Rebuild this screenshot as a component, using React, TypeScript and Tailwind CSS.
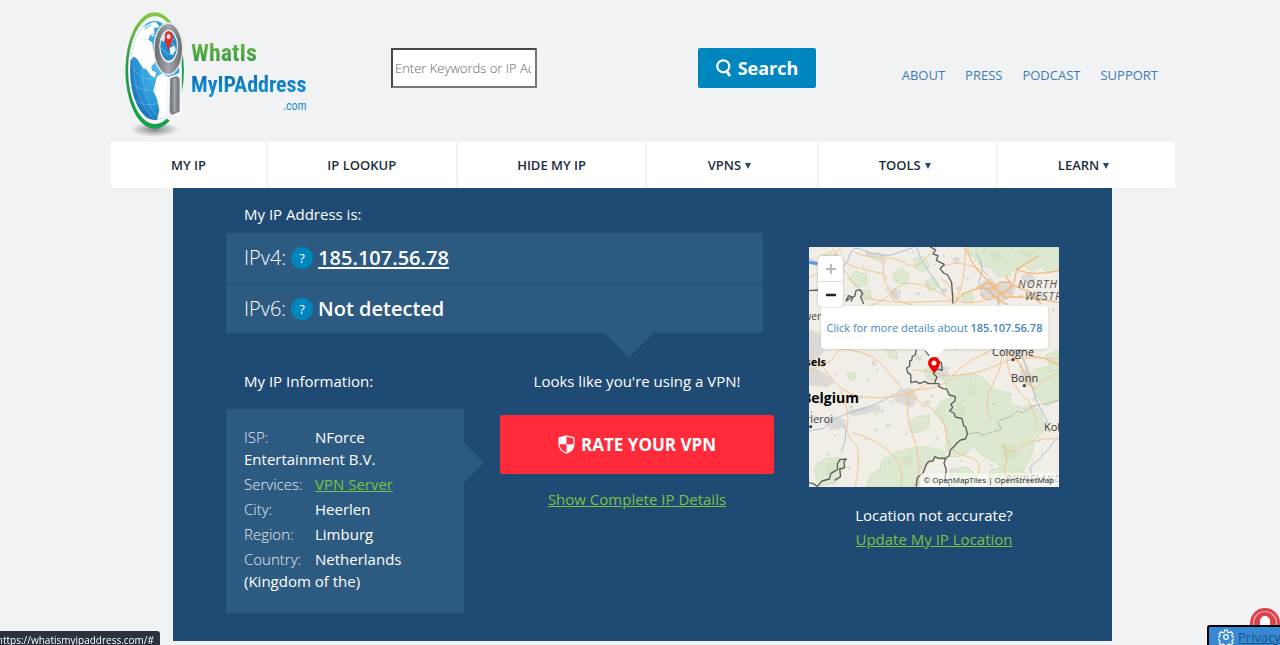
import type { ReactNode } from "react";

const navItems = [
  { label: "MY IP", menu: false },
  { label: "IP LOOKUP", menu: false },
  { label: "HIDE MY IP", menu: false },
  { label: "VPNS", menu: true },
  { label: "TOOLS", menu: true },
  { label: "LEARN", menu: true },
];

const topLinks = ["ABOUT", "PRESS", "PODCAST", "SUPPORT"];

function LogoGlobe() {
  return (
    <svg viewBox="0 0 210 400" className="h-[133px] w-[70px] shrink-0" aria-hidden="true">
      <defs>
        <linearGradient id="ring" x1="0" y1="0" x2="0" y2="1">
          <stop offset="0" stopColor="#8cc63f" />
          <stop offset="0.45" stopColor="#229a48" />
          <stop offset="1" stopColor="#16a04a" />
        </linearGradient>
        <radialGradient id="sea" cx="0.6" cy="0.4" r="0.7">
          <stop offset="0" stopColor="#5fc0ee" />
          <stop offset="0.6" stopColor="#2c9bdc" />
          <stop offset="1" stopColor="#1668b2" />
        </radialGradient>
        <linearGradient id="steel" x1="0" y1="0" x2="1" y2="0">
          <stop offset="0" stopColor="#666a6d" />
          <stop offset="0.5" stopColor="#a5a8aa" />
          <stop offset="1" stopColor="#6b6e70" />
        </linearGradient>
        <radialGradient id="shade">
          <stop offset="0" stopColor="#000" stopOpacity="0.45" />
          <stop offset="1" stopColor="#000" stopOpacity="0" />
        </radialGradient>
        <clipPath id="globe">
          <ellipse cx="101" cy="185" rx="74" ry="149" />
        </clipPath>
      </defs>
      <ellipse cx="101" cy="362" rx="74" ry="22" fill="url(#shade)" />
      <ellipse cx="101" cy="185" rx="88" ry="175" fill="url(#ring)" />
      <ellipse cx="102" cy="184" rx="81" ry="162" fill="#f5f8fa" />
      <ellipse cx="101" cy="185" rx="74" ry="149" fill="url(#sea)" />
      <g clipPath="url(#globe)">
        <path d="M38 93Q58 46 104 38L116 54 98 58 101 72 88 77 82 92 94 102 96 125 108 137 119 130 117 151 104 158 91 173 93 186 105 190 102 207 89 199 76 181 66 178 49 151 38 143 29 155 26 120Z" fill="#fff" />
        <path d="M68 53 93 43 90 52 73 64ZM88 76 100 74 103 80 93 85Z" fill="#b5dff3" />
        <path d="M108 204 123 193 144 206 160 220 170 244 163 279 143 312 117 341 107 341 115 303 108 270 97 246Z" fill="#fff" />
        <g fill="none" stroke="#a8daf3" strokeOpacity="0.7" strokeWidth="1.5">
          <path d="M29 225Q71 253 115 240M34 268Q71 298 111 284M38 150Q32 260 97 330M64 177Q65 280 116 333M34 178Q68 222 103 207" />
        </g>
      </g>
      <path d="M138 205Q166 200 182 186L184 330Q160 350 134 326Z" fill="#f3f6f8" />
      <path d="M150 210Q160 206 167 204Q172 205 174 211V307L153 316Q148 312 148 303Z" fill="url(#steel)" stroke="#777b7d" strokeWidth="4" strokeLinejoin="round" />
      <ellipse cx="142" cy="120" rx="45" ry="80" fill="#e4e9eb" />
      <ellipse cx="142" cy="120" rx="41" ry="75" fill="url(#steel)" />
      <ellipse cx="143" cy="112" rx="28" ry="49" fill="#fff" />
      <ellipse cx="143" cy="112" rx="25" ry="44" fill="#2689c8" />
      <path d="M120 91 133 72 150 77 158 92 149 99 136 85 127 99ZM146 117 161 110 165 122 155 139 148 134Z" fill="#edf6fb" />
      <path d="M122 118Q137 140 158 137M132 72Q158 103 164 127" fill="none" stroke="#8fd0f2" strokeWidth="2" />
      <path d="M142 125Q137 104 131 94Q129 68 143 66Q157 69 156 91Q151 101 142 125Z" fill="#dc2d25" />
      <ellipse cx="143" cy="83" rx="6" ry="8" fill="#f8dede" />
    </svg>
  );
}

function Help({ label }: { label: string }) {
  return (
    <button aria-label={label} className="mx-[5px] flex size-[22px] items-center justify-center rounded-full bg-[#0086bf] text-[13px] leading-[22px] text-white">
      ?
    </button>
  );
}

function InfoRow({ label, children }: { label: string; children: ReactNode }) {
  return (
    <li>
      <span className="inline-block w-[71px] font-light text-[#e6edf3]">{label}</span>
      {children}
    </li>
  );
}

function MapLabel({ className, children }: { className: string; children: ReactNode }) {
  return <span className={`absolute whitespace-nowrap ${className}`}>{children}</span>;
}

function MapArt() {
  return (
    <svg viewBox="27 21 750 720" className="block size-full" aria-hidden="true">
      <rect x="27" y="21" width="750" height="720" fill="#f1eee8" />
      <g fill="#dde8d0" stroke="#c3dcae" strokeWidth="2">
        <path d="M503 21H777V92L742 98 724 80 697 93 668 76 640 91 626 109 595 110 569 82 541 79 530 53 506 44Z" />
        <path d="M432 420 480 405 520 398 555 419 580 448 632 461 629 489 670 505 688 491 724 513 731 546 727 576 704 601 696 640 681 672 660 706 620 706 588 667 544 644 520 618 492 647 450 651 437 623 445 584 425 541 404 521 420 487 451 474Z" />
        <path d="M700 390 740 380 777 388V480L740 500 700 460ZM570 690 620 680 680 700 690 741H560ZM450 690 500 680 530 710 520 741H455Z" />
        <path d="M247 659 292 636 330 624 377 621 426 630 444 659 401 657 371 685 354 740H197L214 701 239 690ZM43 684 76 656 120 652 134 681 106 730 54 738ZM326 550 351 530 388 526 386 560 356 578 334 576Z" />
        <path d="M62 53 88 34 113 51 95 74 72 72ZM146 117 166 93 199 104 203 132 176 141ZM277 102 303 84 327 103 318 132 290 129ZM340 57 371 50 390 78 370 95 346 85ZM179 153 209 150 214 176 188 181ZM373 125 404 113 415 141 387 153ZM213 44 239 36 250 54 227 63ZM485 160 514 154 521 184 493 190ZM260 332 288 330 292 357 267 351ZM373 386 399 388 407 420 381 416ZM140 403 160 396 169 411 151 423ZM221 501 239 510 231 525 217 516ZM738 344 777 330V388L752 392Z" />
      </g>
      <g fill="#cfe1bf" opacity="0.7">
        <path d="M566 43 600 29 609 59 585 70ZM660 27 706 34 692 55 672 49ZM472 490 499 508 490 536 463 522ZM599 616 641 608 650 647 619 667ZM507 431 533 442 519 471 499 458ZM301 657 335 643 341 668 319 680ZM74 672 112 662 103 694 79 711Z" />
      </g>
      <g fill="#dcd9d6">
        <path d="M546 126 570 112 591 135 623 128 646 145 638 170 611 183 580 175 552 181 540 158ZM660 110 690 96 708 118 690 140ZM690 160 720 150 738 170 712 188ZM604 296 633 286 671 302 684 328 655 347 620 337 597 323ZM28 267 64 283 76 319 61 351 28 363ZM28 374 59 391 80 404 104 426 82 441 28 436ZM292 452 330 443 354 471 336 502 309 493 281 483ZM415 376 441 382 449 410 426 419 409 399ZM660 385 692 398 703 426 682 439 661 420ZM266 155 285 143 303 153 297 176 277 182ZM198 31 225 43 218 55 194 49ZM69 541 101 527 138 540 132 563 94 571ZM140 512 192 500 239 494 242 506 199 522 154 528Z" />
        <path d="M235 57l13-6 10 15-16 6zM421 150l15-8 8 12-16 8zM455 55l20-5 7 11-15 11zM100 102l17-6 5 12-13 8zM351 345l15 4-3 13-18-3zM213 362l11-2 6 14-12 5zM145 463l14-3 8 10-14 6zM258 553l9-5 7 8-13 7zM376 480l14 4-3 12-12-4zM708 258l17-7 10 15-18 11zM525 290l15-5 9 14-16 8z" />
      </g>
      <g fill="#d8d5d3">
        {Array.from({ length: 110 }, (_, i) => (
          <ellipse key={i} cx={32 + ((i * 157) % 735)} cy={28 + ((i * 263) % 700)} rx={3 + (i % 4)} ry={3 + (i % 3)} />
        ))}
      </g>
      <g fill="none" stroke="#a6bfe2" strokeWidth="3">
        <path d="M27 55Q50 64 65 79T108 92Q139 84 148 48T191 31Q249 53 281 43T340 22M349 21Q359 57 384 92T430 159" />
        <path d="M527 39Q558 82 541 111T575 155Q602 180 595 215T632 293Q668 344 683 397T713 491Q735 522 743 549M695 704Q683 680 706 667T727 642Q741 638 762 603L777 592M286 461Q230 496 166 513T71 565L27 573M133 555Q145 592 123 636" />
      </g>
      <path d="M27 66 52 72" fill="none" stroke="#5f94dc" strokeWidth="9" />
      <g fill="none" stroke="#f2c48e" strokeWidth="3">
        <path d="M27 112Q81 91 105 46T160 21M67 42Q125 72 157 123T214 178L301 187 455 183M158 34Q201 54 239 51T314 70 382 50 416 21M257 53Q244 91 253 119T279 156Q313 111 386 143T465 189M96 21Q119 76 202 91T253 119M278 156Q245 188 212 195M279 156Q283 184 334 194M423 116Q451 131 461 165T550 183" />
        <path d="M27 389Q88 375 105 347T150 330Q220 340 253 381T311 452M27 348Q68 374 83 399T132 451Q176 480 273 471L327 461Q369 440 414 412M327 460Q315 529 337 583T356 699L344 740M122 453Q151 521 142 552T172 620Q180 669 166 740M158 579Q221 593 269 635T303 740M327 460Q355 485 395 505T440 594Q457 643 503 650T535 703" />
        <path d="M337 390Q372 391 411 401T457 407Q493 369 536 349T595 318M457 407Q526 403 570 384T636 358Q682 351 777 356M605 332Q610 374 579 432T573 538M624 344Q616 384 644 433T684 480Q701 507 712 562M664 342Q685 385 701 426M608 621 639 637Q691 590 777 596M608 610Q628 653 613 690L623 740M455 415Q418 446 365 448T327 461M465 189Q500 120 495 21M430 80Q470 60 520 80T564 110M716 440Q740 410 777 400" />
      </g>
      <g fill="none" stroke="#f6b878" strokeWidth="4">
        <path d="M465 189Q489 151 540 145T616 173Q655 165 777 188M495 21Q514 70 545 104T591 137L599 191M541 163 564 181 608 162 641 133 650 88 716 47M575 145 605 126 636 128M569 154Q584 180 625 194M527 145 565 128 592 154 636 158M618 108 633 134 693 157 724 192M650 88Q700 110 777 92" />
        <path d="M595 317Q624 289 667 307T691 349Q732 348 777 376M627 336Q665 369 676 405T708 450" />
      </g>
      <g fill="none" stroke="#b1b4a8" strokeWidth="3" strokeDasharray="11 3">
        <path d="M502 582 534 577 547 585 577 577 604 568 593 544 633 528 653 513 669 519 698 498 754 487 777 480" />
      </g>
      <g fill="none" stroke="#5b5d5e" strokeWidth="4" strokeLinejoin="round">
        <path d="M391 21 407 30 399 42 414 47 409 61 433 73 420 86 431 99 443 105 455 128 459 191M27 152 52 150 64 157M137 184 151 174 164 169 168 152 180 149 188 160 182 171 191 192M138 180 147 167 158 173 153 185M349 329 346 345 337 349 335 362 329 362 329 378 320 384 323 398 332 404 333 428 348 424 359 431 374 424 386 431 404 430 417 431 417 440 430 446 440 447 448 465 466 470 465 483 453 493 458 502 449 513 462 519 466 531 486 536 491 557 497 561 502 582 496 597 482 600 471 609 460 622 451 630 448 647 438 654 417 655 404 650 399 663 386 664 378 675 370 698 352 713 349 740M437 654 432 670 439 689 435 715 450 740M27 728 39 731 52 739 66 723 88 717 93 700 113 688 112 673 119 659 139 657 132 665 134 683 119 687 122 710 104 721M404 430 411 410 400 401 412 387 427 391 424 367 409 364 412 352M375 331 387 347" />
      </g>
      <g fill="#444">
        <circle cx="639" cy="359" r="5" />
        <circle cx="673" cy="437" r="5" />
        <circle cx="32" cy="560" r="5" />
      </g>
    </svg>
  );
}

function LocationMap() {
  return (
    <div className="relative h-[240px] w-[250px] overflow-hidden">
      <MapArt />
      <MapLabel className="left-[209px] top-[30px] text-[11px] leading-[14px] tracking-[1px] italic text-[#555]">NORTH</MapLabel>
      <MapLabel className="left-[216px] top-[42px] text-[11px] leading-[14px] tracking-[1px] italic text-[#555]">WESTPHALIA</MapLabel>
      <MapLabel className="right-[238px] top-[62px] text-[10px] leading-[14px] text-[#444]">Antwer</MapLabel>
      <MapLabel className="left-[183px] top-[98px] text-[11px] leading-[14px] text-[#333]">Cologne</MapLabel>
      <MapLabel className="left-[202px] top-[124px] text-[11px] leading-[14px] text-[#333]">Bonn</MapLabel>
      <MapLabel className="left-[235px] top-[173px] text-[11px] leading-[14px] text-[#333]">Koblenz</MapLabel>
      <MapLabel className="right-[233px] top-[108px] text-[11px] leading-[14px] font-bold text-black">Brussels</MapLabel>
      <MapLabel className="right-[200px] top-[142px] text-[14px] leading-[18px] font-bold text-black">Belgium</MapLabel>
      <MapLabel className="right-[226px] top-[165px] text-[11px] leading-[14px] text-[#444]">Charleroi</MapLabel>
      <MapLabel className="left-[197px] top-[225px] text-[9px] leading-[14px] tracking-[1px] italic text-[#777]">RHINELAND</MapLabel>

      <a href="#details" className="absolute left-[12px] top-[59px] flex h-[43px] w-[227px] items-center justify-center rounded-[3px] bg-white text-[11px] whitespace-nowrap text-[#4283bd] shadow">
        <span>Click for more details about <span className="font-semibold">185.107.56.78</span></span>
      </a>
      <svg viewBox="0 0 20 10" className="absolute left-[115px] top-[102px] h-[10px] w-[20px]" aria-hidden="true">
        <path d="M0 0H20L10 10Z" fill="#fff" />
      </svg>
      <svg viewBox="0 0 14 18" className="absolute left-[118px] top-[110px] h-[18px] w-[14px]" aria-hidden="true">
        <path d="M7 0a6 6 0 0 1 6 6c0 3-3 6-6 10C4 12 1 9 1 6a6 6 0 0 1 6-6Z" fill="#f00000" />
        <circle cx="7" cy="6" r="2.5" fill="#fff" />
      </svg>
      <div className="absolute left-[9px] top-[9px] w-[25px] overflow-hidden rounded-[4px] bg-white shadow-[0_0_2px_rgba(0,0,0,0.35)]">
        <button aria-label="Zoom in" className="flex h-[26px] w-full items-center justify-center border-b border-[#ddd]">
          <svg viewBox="0 0 12 12" className="size-3"><path d="M6 1V11M1 6H11" stroke="#bbb" strokeWidth="2" /></svg>
        </button>
        <button aria-label="Zoom out" className="flex h-[25px] w-full items-center justify-center">
          <svg viewBox="0 0 12 12" className="size-3"><path d="M1 6H11" stroke="#222" strokeWidth="2.5" /></svg>
        </button>
      </div>
      <p className="absolute right-0 bottom-0 bg-white/50 pr-[5px] pl-1 text-[8px] leading-[14px] whitespace-nowrap text-[#222]">
        © OpenMapTiles | OpenStreetMap
      </p>
    </div>
  );
}

export default function App() {
  return (
    <div className="min-h-screen overflow-hidden bg-[#f1f2f4] pl-[6px] pb-[3px] font-['Open_Sans','Noto_Sans',sans-serif] text-white">
      <div className="mx-auto max-w-[1064px]">
        <header className="flex h-[142px] items-start">
          <a href="#home" aria-label="What Is My IP Address" className="mt-[9px] ml-[10px] flex w-[191px] font-['Liberation_Sans_Narrow','Roboto_Condensed','Liberation_Sans',sans-serif] font-bold">
            <LogoGlobe />
            <span className="flex flex-col pt-[29px]">
              <span className="bg-linear-to-b from-[#77bc3f] to-[#1f9447] bg-clip-text text-[24px] leading-[30px] text-transparent">WhatIs</span>
              <span className="bg-linear-to-b from-[#0b63ad] to-[#18a2e2] bg-clip-text text-[22px] leading-[34px] text-transparent">MyIPAddress</span>
              <span className="-mt-[3px] self-end text-[12px] leading-[14px] font-normal text-[#1b8cce]">.com</span>
            </span>
          </a>
          <form className="flex flex-1 items-start pt-12 pl-[79px]" onSubmit={(e) => e.preventDefault()}>
            <input
              type="text"
              aria-label="Enter Keywords or IP Address"
              placeholder="Enter Keywords or IP Address"
              className="h-10 w-[146px] border-2 border-t-[#484848] border-r-[#777] border-b-[#777] border-l-[#484848] bg-white pr-1 pl-[2px] text-[13px] font-light text-[#333] placeholder:text-[#666]"
            />
            <button className="ml-[161px] flex h-10 w-[118px] items-center justify-center gap-[6px] rounded-[2px] bg-[#0086bf] text-[18px] font-bold">
              <svg viewBox="0 0 16 18" className="h-[18px] w-4" fill="none" stroke="white" strokeWidth="2.2" aria-hidden="true">
                <circle cx="7.3" cy="7.3" r="6" />
                <path d="M10.5 12 14 17" strokeWidth="2.8" />
              </svg>
              Search
            </button>
          </form>
          <nav aria-label="Site" className="flex gap-5 pt-[65px] pr-[17px] text-[13px] leading-[20px] font-medium text-[#3d7cb4]">
            {topLinks.map((label) => (
              <a key={label} href={`#${label.toLowerCase()}`}>{label}</a>
            ))}
          </nav>
        </header>

        <nav aria-label="Main" className="grid grid-cols-[155fr_188fr_188fr_170fr_177fr_177fr] gap-[2px] text-[13px] font-semibold text-[#1d2d3c]">
          {navItems.map((item) => (
            <a key={item.label} href="#menu" className={`flex h-[46px] items-center justify-center gap-1 bg-white pt-px ${item.menu ? "pr-[6px]" : ""}`}>
              {item.label}
              {item.menu && (
                <svg viewBox="0 0 6 6" className="size-[6px]" aria-hidden="true"><path d="M0 0H6L3 6Z" fill="#1f4a73" /></svg>
              )}
            </a>
          ))}
        </nav>

        <main className="mr-[63px] ml-[62px] flex justify-between bg-[#1f4a73] px-[53px] pt-[14px] pb-7 text-[15px] leading-[22px]">
          <div className="w-[548px]">
            <h2 className="pl-[18px] leading-6">My IP Address is:</h2>
            <div className="relative mt-[7px] mr-[11px] flex flex-col gap-px text-[20px]">
              <p className="flex h-[50px] items-center bg-[#2d5a80] pl-[18px]">
                <span className="font-light">IPv4:</span> <Help label="What is IPv4?" />
                <a href="#ip" className="font-semibold underline decoration-2 underline-offset-2">185.107.56.78</a>
              </p>
              <p className="flex h-[49px] items-center bg-[#2d5a80] pl-[18px]">
                <span className="font-light">IPv6:</span> <Help label="What is IPv6?" />
                <strong className="font-semibold">Not detected</strong>
              </p>
              <span className="absolute top-full left-[378px] h-6 w-[50px] bg-[#2d5a80] [clip-path:polygon(0_0,100%_0,50%_100%)]" />
            </div>
            <div className="mt-9 flex gap-9">
              <section className="w-[238px]">
                <h2 className="pl-[18px] leading-6">My IP Information:</h2>
                <div className="relative mt-4 bg-[#2d5a80] px-[18px] pt-[17px] pb-[21px]">
                  <ul className="flex flex-col gap-[3px]">
                    <InfoRow label="ISP:">NForce Entertainment B.V.</InfoRow>
                    <InfoRow label="Services:"><a href="#vpn" className="text-[#7cc142] underline">VPN Server</a></InfoRow>
                    <InfoRow label="City:">Heerlen</InfoRow>
                    <InfoRow label="Region:">Limburg</InfoRow>
                    <InfoRow label="Country:">Netherlands (Kingdom of the)</InfoRow>
                  </ul>
                  <span className="absolute top-[34px] left-full h-10 w-5 bg-[#2d5a80] [clip-path:polygon(0_0,100%_50%,0_100%)]" />
                </div>
              </section>
              <section className="flex w-[274px] flex-col items-center">
                <p className="leading-6">Looks like you're using a VPN!</p>
                <button className="mt-[22px] flex h-[59px] w-full items-center justify-center gap-[6px] rounded-[2px] bg-[#ff2a3a] text-[17px] font-bold">
                  <svg viewBox="0 0 17 19" className="h-[19px] w-[17px]" aria-hidden="true">
                    <path d="M8.5.8 16 3V9Q16 15.5 8.5 18.2 1 15.5 1 9V3Z" fill="none" stroke="white" strokeWidth="1.2" />
                    <path d="M8.5.8V9.3H1V3ZM8.5 9.3H16Q15.6 15.5 8.5 18.2Z" fill="white" />
                  </svg>
                  RATE YOUR VPN
                </button>
                <a href="#complete" className="mt-[13px] leading-6 text-[#7cc142] underline">Show Complete IP Details</a>
              </section>
            </div>
          </div>
          <aside className="w-[250px] pt-[45px] text-center">
            <LocationMap />
            <p className="mt-4 leading-6">Location not accurate?</p>
            <a href="#update" className="leading-[25px] text-[#7cc142] underline">Update My IP Location</a>
          </aside>
        </main>
      </div>

      <div className="fixed bottom-0 left-0 flex h-[14px] w-[160px] justify-end overflow-hidden rounded-tr-[3px] bg-[#2b323c] pr-[6px] text-[10px] leading-[19px] whitespace-nowrap">
        https://whatismyipaddress.com/#
      </div>
      <button aria-label="Notifications" className="fixed right-0 bottom-[7px] h-[30px] w-[30px] rounded-tl-full rounded-tr-full shadow-md">
        <svg viewBox="0 0 30 30" className="size-full" aria-hidden="true">
          <circle cx="15" cy="15" r="15" fill="#dc4249" />
          <circle cx="15" cy="15" r="11.5" fill="none" stroke="#f3b6b8" strokeWidth="1.2" />
          <path d="M10 20V13a5 5 0 0 1 10 0v7Z" fill="#fff" />
        </svg>
      </button>
      <a href="#privacy" className="fixed right-0 bottom-0 flex h-[20px] w-[73px] items-start gap-1 overflow-hidden rounded-tl-[3px] border-t-2 border-l-2 border-black bg-[#3789d5] pt-px pl-[9px] text-[13px] leading-[18px] text-[#1b5380] underline">
        <svg viewBox="0 0 24 24" className="mt-px size-4 shrink-0" fill="none" stroke="white" strokeWidth="1.8" aria-hidden="true">
          <circle cx="12" cy="12" r="3.5" />
          <path d="M10 1.8h4l.7 3 2.1.9 2.7-1.6 2.8 2.8-1.6 2.7.9 2.1 3 .7v3.4l-3 .7-.9 2.1 1.6 2.7-2.8 2.8-2.7-1.6-2.1.9-.7 3h-4l-.7-3-2.1-.9-2.7 1.6-2.8-2.8 1.6-2.7-.9-2.1-3-.7v-3.4l3-.7.9-2.1-1.6-2.7 2.8-2.8 2.7 1.6 2.1-.9Z" />
        </svg>
        Privacy
      </a>
    </div>
  );
}
